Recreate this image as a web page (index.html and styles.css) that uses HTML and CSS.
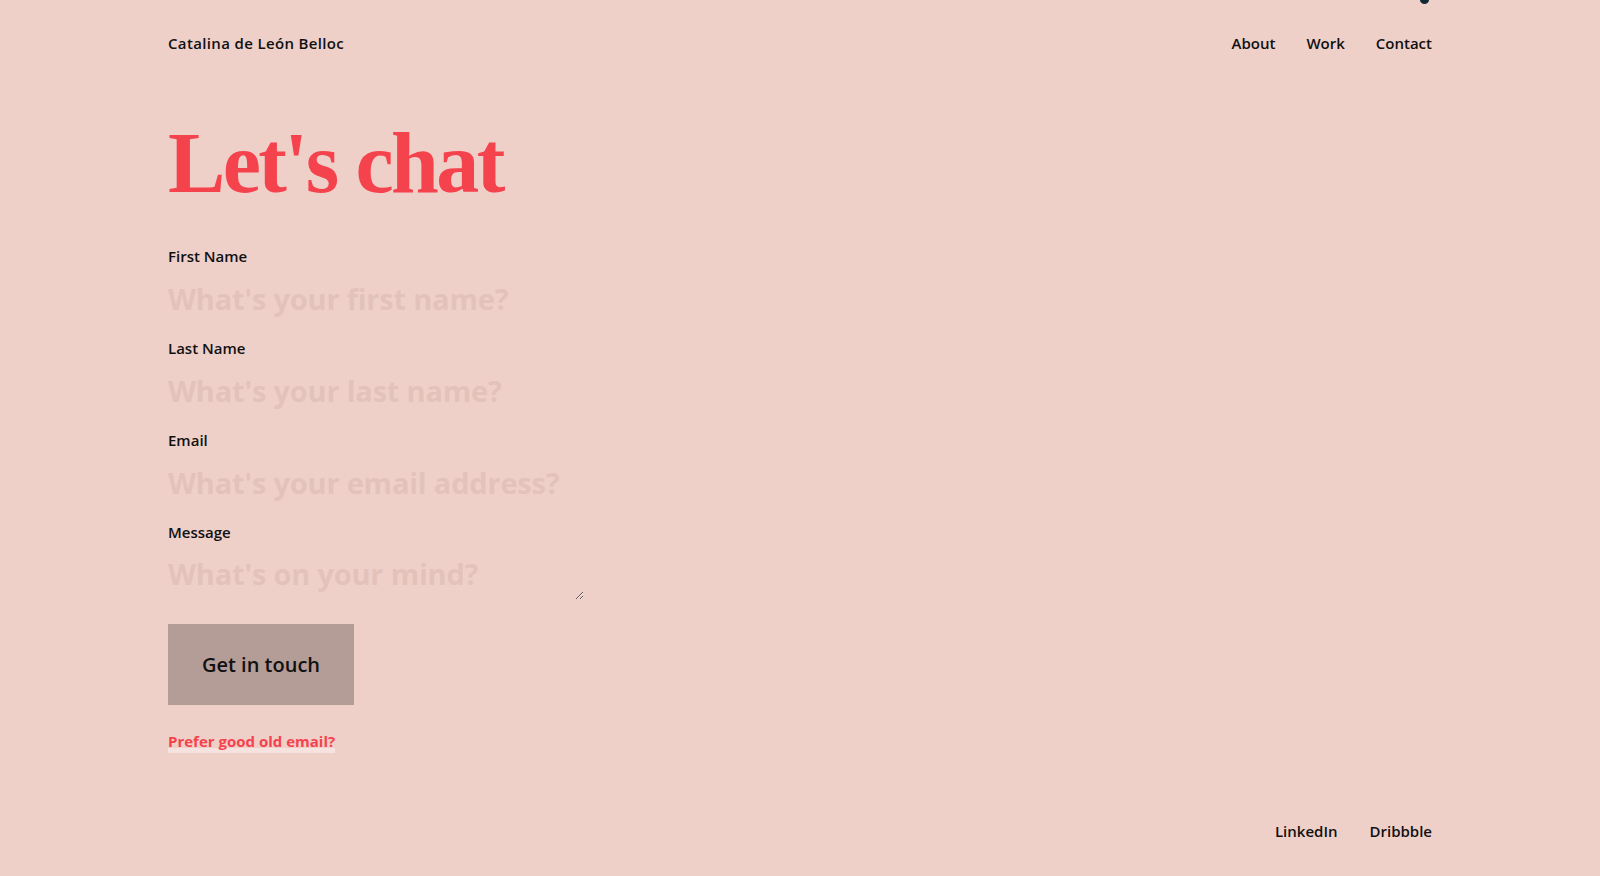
FILE: index.html
```html
<!DOCTYPE html>
<html lang="en">
<head>
<meta charset="utf-8">
<title>Contact — Catalina de León Belloc</title>
<link rel="stylesheet" href="styles.css">
</head>
<body>
<span class="dot"></span>
<div class="page">
  <header class="header">
    <a class="brand" href="#">Catalina de León Belloc</a>
    <nav class="nav">
      <a href="#">About</a>
      <a href="#">Work</a>
      <a href="#">Contact</a>
    </nav>
  </header>
  <main class="main">
    <h1 class="title">Let's chat</h1>
    <form class="form">
      <div class="field">
        <label for="fn">First Name</label>
        <input id="fn" type="text" placeholder="What's your first name?">
      </div>
      <div class="field">
        <label for="ln">Last Name</label>
        <input id="ln" type="text" placeholder="What's your last name?">
      </div>
      <div class="field">
        <label for="em">Email</label>
        <input id="em" type="email" placeholder="What's your email address?">
      </div>
      <div class="field">
        <label for="msg">Message</label>
        <textarea id="msg" placeholder="What's on your mind?"></textarea>
      </div>
      <button class="btn" type="button">Get in touch</button>
    </form>
    <a class="mail" href="#">Prefer good old email?</a>
  </main>
  <footer class="footer">
    <a href="#">LinkedIn</a>
    <a href="#">Dribbble</a>
  </footer>
</div>
</body>
</html>
```

FILE: styles.css
```css
* { box-sizing: border-box; }
html, body { margin: 0; padding: 0; }
body {
  background: #efd0c9;
  font-family: "Open Sans", "Lato", "Liberation Sans", sans-serif;
  color: #111;
  position: relative;
  overflow: hidden;
}
a { color: inherit; text-decoration: none; }
.dot {
  position: absolute;
  top: -4px;
  left: 1420px;
  width: 9px;
  height: 8px;
  border-radius: 50%;
  background: #0f2a35;
}
.page {
  min-height: 100vh;
  display: flex;
  flex-direction: column;
  padding: 0 168px;
}
.header {
  display: flex;
  justify-content: space-between;
  align-items: center;
  height: 86px;
  font-weight: 600;
  font-size: 15px;
  line-height: 18px;
}
.brand { letter-spacing: 0.35px; }
.nav { display: flex; gap: 31px; }
.main { display: flex; flex-direction: column; align-items: flex-start; }
.title {
  margin: 34px 0 0;
  font-family: "Liberation Serif", "Times New Roman", serif;
  font-weight: 700;
  font-size: 86px;
  line-height: 86px;
  letter-spacing: -2.6px;
  color: #f5434e;
}
.form { margin-top: 41px; display: flex; flex-direction: column; align-items: flex-start; }
.field { display: flex; flex-direction: column; margin-bottom: 19px; }
.field label {
  font-size: 15px;
  line-height: 18px;
  font-weight: 600;
  margin-bottom: 11px;
}
.field input, .field textarea {
  font-family: "Open Sans", "Lato", "Liberation Sans", sans-serif;
  font-weight: 700;
  font-size: 29px;
  letter-spacing: -0.2px;
  border: none;
  outline: none;
  background: transparent;
  padding: 0;
  margin: 0;
  color: #222;
  width: 416px;
}
.field input { height: 44px; padding-top: 1px; }
.field textarea {
  height: 46px;
  line-height: 36px;
  padding-top: 2px;
  margin-top: 2px;
  resize: vertical;
  overflow: hidden;
}
.field input::placeholder, .field textarea::placeholder { color: #e3c2bc; opacity: 1; }
.field:last-of-type { margin-bottom: 24px; }
.btn {
  width: 186px;
  height: 81px;
  background: #b49c97;
  border: none;
  font-family: "Open Sans", "Lato", "Liberation Sans", sans-serif;
  font-weight: 600;
  font-size: 20px;
  color: #111;
  cursor: pointer;
}
.mail {
  margin-top: 27px;
  display: inline-block;
  font-size: 15px;
  line-height: 18px;
  font-weight: 700;
  color: #f5434e;
  padding-bottom: 3px;
  background: linear-gradient(to top, #f6e3df 5px, transparent 5px);
}
.footer {
  margin-top: auto;
  display: flex;
  justify-content: flex-end;
  gap: 32px;
  padding-bottom: 36px;
  font-size: 15px;
  line-height: 18px;
  font-weight: 600;
}
```
